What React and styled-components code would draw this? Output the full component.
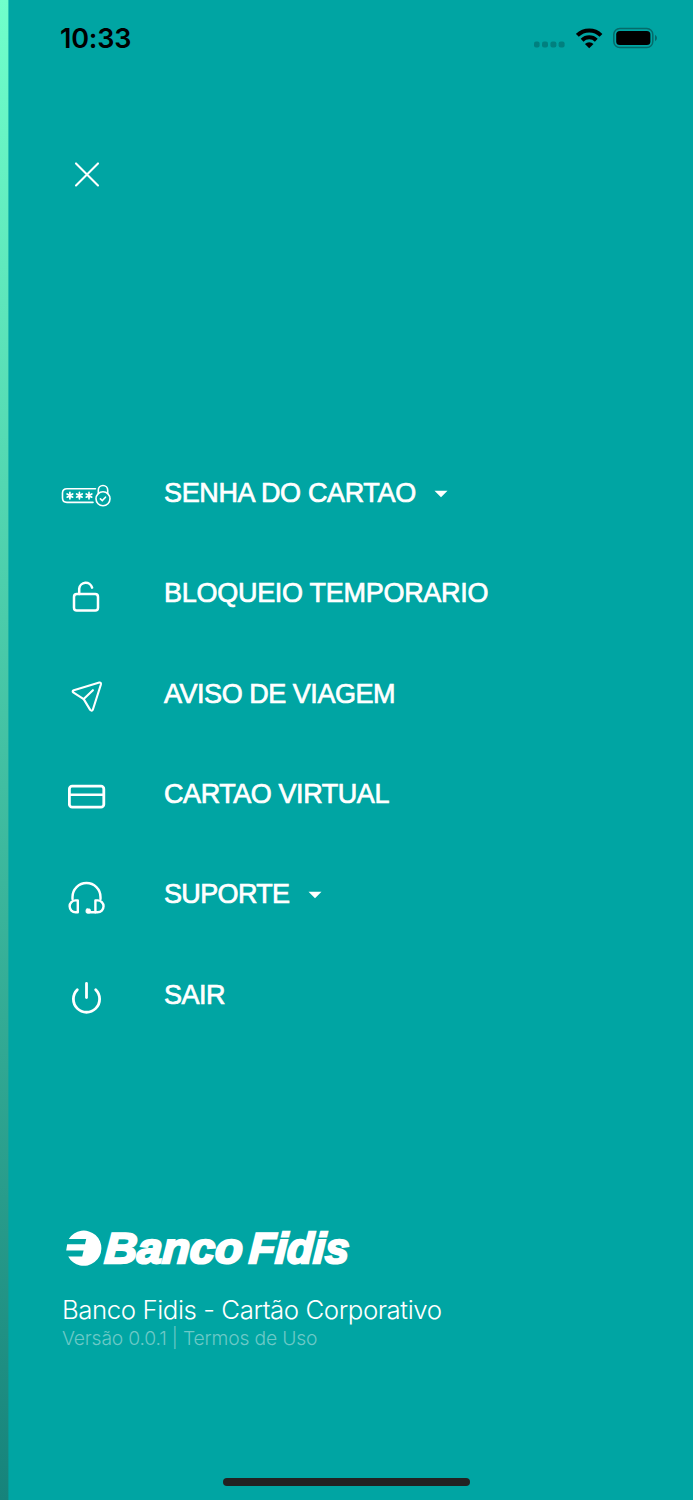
import React from 'react';
import styled, { createGlobalStyle } from 'styled-components';

const GlobalStyle = createGlobalStyle`
	* {
		box-sizing: border-box;
	}
	body {
		margin: 0;
		background: #00a5a3;
	}
`;

const Screen = styled.div`
	display: flex;
	width: 693px;
	height: 1500px;
	overflow: hidden;
	background: linear-gradient(180deg, #70ffcb 0%, #16837b 100%);
`;

const Drawer = styled.div`
	display: flex;
	flex-direction: column;
	width: 685px;
	height: 1500px;
	margin-left: 8px;
	border-left: 1px solid rgba(0, 165, 163, 0.6);
	background: #00a5a3;
	background-clip: padding-box;
	color: #fff;
	font-family: 'Liberation Sans', Arial, sans-serif;
`;

const StatusBar = styled.header`
	display: flex;
	justify-content: space-between;
	align-items: center;
	height: 76px;
	padding: 1px 35px 0 51px;
	color: #000;
`;

const Clock = styled.span`
	font-family: Inter, sans-serif;
	font-size: 27px;
	font-weight: 600;
	line-height: 32px;
	letter-spacing: -0.2px;
	padding-top: 1px;
`;

const StatusIcons = styled.div`
	display: flex;
	align-items: center;
	height: 24px;
	gap: 10px;
`;

const CloseButton = styled.button`
	display: block;
	width: 26px;
	height: 26px;
	margin: 85px 0 0 65px;
	padding: 0;
	border: 0;
	background: none;
	color: #fff;
	svg {
		display: block;
	}
`;

const Menu = styled.nav`
	display: flex;
	flex-direction: column;
	margin-top: 255.7px;
`;

const MenuItem = styled.a`
	display: flex;
	align-items: center;
	height: 100.35px;
	padding-left: 52px;
	color: #fff;
`;

const IconBox = styled.span`
	display: flex;
	width: 50px;
	height: 40px;
	margin: 7px 53px 0 0;
	svg {
		display: block;
	}
`;

const Label = styled.span`
	font-size: 27px;
	line-height: 32px;
	white-space: nowrap;
	letter-spacing: ${(p) => p.$spacing}px;
	-webkit-text-stroke: 0.7px #fff;
`;

const Caret = styled.svg`
	display: block;
	margin: 2px 0 0 18.5px;
`;

const Footer = styled.footer`
	display: flex;
	flex-direction: column;
	margin-top: auto;
	padding: 0 0 128px 53px;
`;

const Logo = styled.svg`
	display: block;
	margin-bottom: 15px;
`;

const AppName = styled.div`
	font-family: Inter, sans-serif;
	font-size: 25.8px;
	font-weight: 300;
	line-height: 32px;
	letter-spacing: -0.43px;
	white-space: nowrap;
`;

const Version = styled.div`
	font-family: Inter, sans-serif;
	font-size: 19.3px;
	font-weight: 300;
	line-height: 24px;
	letter-spacing: -0.17px;
	white-space: nowrap;
	color: #6cc9c7;
`;

const HomeBar = styled.div`
	flex: none;
	width: 247px;
	height: 8px;
	margin: 0 0 14px 214px;
	border-radius: 4px;
	background: #222;
`;

const SignalIcon = () => (
	<svg width="32" height="24" viewBox="0.6 0 32 24" fill="#00807f">
		<rect x="0.6" y="14.6" width="5.6" height="6" rx="2" />
		<rect x="8.6" y="14.6" width="6" height="6" rx="2" />
		<rect x="17" y="14.6" width="6" height="6" rx="2" />
		<rect x="25.2" y="14.6" width="6" height="6" rx="2" />
	</svg>
);

const WifiIcon = () => (
	<svg width="27" height="24" viewBox="0.8 0 27 24" fill="none" stroke="#000" strokeWidth="4">
		<path d="M2.2 8.3A16.8 16.8 0 0 1 25.8 8.3" />
		<path d="M6.9 13.2A10.2 10.2 0 0 1 21.1 13.2" />
		<path d="M14 21.2L9.7 16.9A6.1 6.1 0 0 1 18.3 16.9Z" fill="#000" stroke="none" />
	</svg>
);

const BatteryIcon = () => (
	<svg width="45" height="24" viewBox="0 0 45 24">
		<rect x="0.8" y="1.5" width="39" height="19" rx="6" fill="none" stroke="#056b6a" strokeWidth="1.5" />
		<rect x="3.2" y="3.9" width="34.2" height="14.2" rx="3.6" fill="#000" />
		<path d="M42 7.7Q44 8.9 44 11T42 14.3Z" fill="#056b6a" />
	</svg>
);

const PasswordIcon = () => (
	<svg width="50" height="40" viewBox="0 0 50 40" fill="none" stroke="#fff" strokeWidth="1.6" strokeLinecap="round">
		<path d="M34.5 12.7H6Q1.5 12.7 1.5 17V22Q1.5 26.4 6 26.4H32" />
		{[8.9, 18.4, 28].map((x) => (
			<path key={x} d={`M${x} 16.4v6.4M${x - 2.8} 18l5.6 3.2M${x + 2.8} 18l-5.6 3.2`} strokeWidth="1.7" />
		))}
		<circle cx="42" cy="22.8" r="7" />
		<path d="M37.3 17.5V14.2A4.7 4.7 0 0 1 46.7 14.2V17.5" />
		<path d="M39.4 22.8l1.9 1.8 3.2-3.4" />
	</svg>
);

const UnlockIcon = () => (
	<svg width="50" height="40" viewBox="0 0 50 40" fill="none" stroke="#fff" strokeWidth="2.5" strokeLinecap="round">
		<rect x="13" y="17.1" width="24" height="16.5" rx="2.8" />
		<path d="M18.2 17.1V11.6A6.6 6.6 0 0 1 31.1 10.6" />
	</svg>
);

const PlaneIcon = () => (
	<svg width="50" height="40" viewBox="-0.9 -0.3 50 40" fill="none" stroke="#fff" strokeWidth="2.1" strokeLinecap="round" strokeLinejoin="round">
		<path d="M37.4 5.2L11.9 12.9Q9.7 13.8 11.7 15.4L21.8 21.8L28.3 32.6Q29.9 34.4 31 32.2L39 7.2Q39.4 4.8 37.4 5.2Z" />
		<path d="M21.8 21.8L31 12.9" />
	</svg>
);

const CardIcon = () => (
	<svg width="50" height="40" viewBox="0 0 50 40" fill="none" stroke="#fff" strokeWidth="2.8">
		<rect x="8.4" y="9.2" width="34.4" height="21" rx="2.8" />
		<path d="M8.4 17.7H42.8" strokeWidth="2.4" />
	</svg>
);

const HeadsetIcon = () => (
	<svg width="50" height="40" viewBox="0 0 50 40" fill="none" stroke="#fff" strokeWidth="2.4" strokeLinecap="round" strokeLinejoin="round">
		<path d="M11.5 21V19A14 14 0 0 1 39.5 19V21" />
		<path d="M16.8 22.4V34.3H14.6A5.95 5.95 0 0 1 14.6 22.4Z" />
		<path d="M34.4 22.4V34.3H36.6A5.95 5.95 0 0 0 36.6 22.4Z" />
		<path d="M34.3 34.3H27" />
		<rect x="25.1" y="31" width="4.2" height="4" rx="1" fill="#fff" strokeWidth="1" />
	</svg>
);

const PowerIcon = () => (
	<svg width="50" height="40" viewBox="0 0 50 40" fill="none" stroke="#fff" strokeWidth="2.8" strokeLinecap="round">
		<path d="M25.5 5.4V19.6" />
		<path d="M16.3 11.8A13.1 13.1 0 1 0 34.7 11.8" />
	</svg>
);

const items = [
	{ label: 'SENHA DO CARTAO', icon: PasswordIcon, caret: true, spacing: -0.35 },
	{ label: 'BLOQUEIO TEMPORARIO', icon: UnlockIcon, spacing: -0.28 },
	{ label: 'AVISO DE VIAGEM', icon: PlaneIcon, spacing: -0.47 },
	{ label: 'CARTAO VIRTUAL', icon: CardIcon, spacing: -0.43 },
	{ label: 'SUPORTE', icon: HeadsetIcon, caret: true, spacing: -0.65 },
	{ label: 'SAIR', icon: PowerIcon, spacing: -0.5 },
];

const App = () => {
	return (
		<>
			<GlobalStyle />
			<Screen>
				<Drawer>
					<StatusBar>
						<Clock>10:33</Clock>
						<StatusIcons>
							<SignalIcon />
							<WifiIcon />
							<BatteryIcon />
						</StatusIcons>
					</StatusBar>
					<CloseButton aria-label="Fechar">
						<svg width="26" height="26" viewBox="0 0 26 26" stroke="#fff" strokeWidth="2.1" strokeLinecap="round">
							<path d="M2 2.4L24 24.4M24 2.4L2 24.4" />
						</svg>
					</CloseButton>
					<Menu>
						{items.map(({ label, icon: Icon, caret, spacing }) => (
							<MenuItem key={label}>
								<IconBox><Icon /></IconBox>
								<Label $spacing={spacing}>{label}</Label>
								{caret && (
									<Caret width="14" height="8" viewBox="0 0 14 8">
										<path d="M0.5 0.7H13.5L7 7.2Z" fill="#fff" />
									</Caret>
								)}
							</MenuItem>
						))}
					</Menu>
					<Footer>
						<Logo width="330" height="62" viewBox="0 -8 330 62" fill="#fff">
							<path d="M6.8 14A17.6 17.6 0 1 1 6.2 31.4H20.2L21.6 25.6H4.2L5.2 19.2H23L24.2 14Z" />
							<g fontFamily="'Liberation Sans', Arial, sans-serif" fontSize="43" fontWeight="700" fontStyle="italic" stroke="#fff" strokeWidth="2.4">
								<text transform="translate(42 38) skewX(-3)" textLength="138" lengthAdjust="spacingAndGlyphs">Banco</text>
								<text transform="translate(186.5 38) skewX(-3)" textLength="100" lengthAdjust="spacingAndGlyphs">Fidis</text>
							</g>
						</Logo>
						<AppName>Banco Fidis - Cartão Corporativo</AppName>
						<Version>Versão 0.0.1 | Termos de Uso</Version>
					</Footer>
					<HomeBar />
				</Drawer>
			</Screen>
		</>
	);
};

export default App;
